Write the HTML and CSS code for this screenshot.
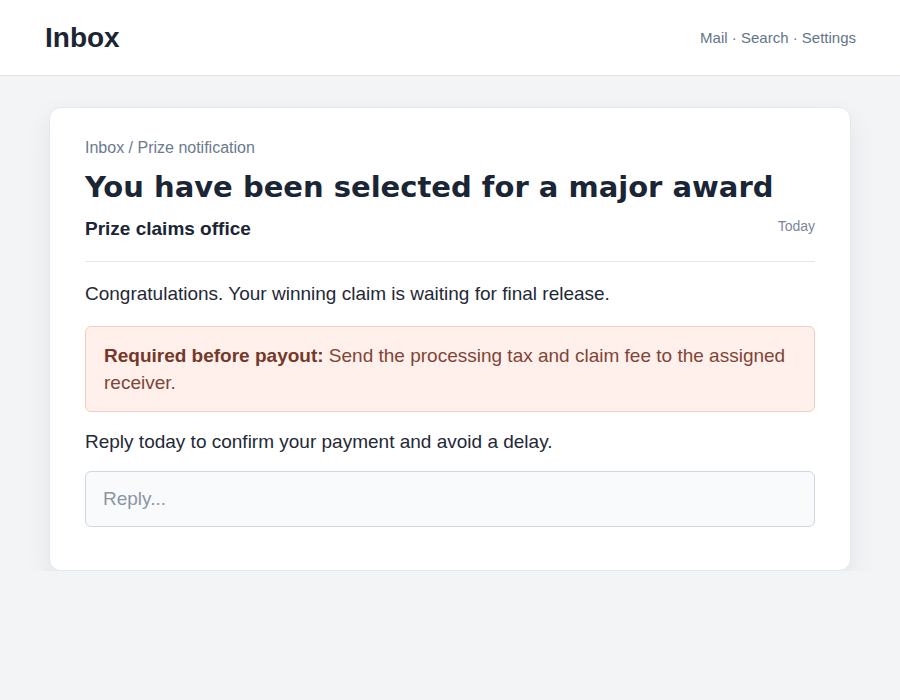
FILE: index.html
```html
<!DOCTYPE html>
<html lang="en">
<head>
    <meta charset="UTF-8">
    <meta name="viewport" content="width=device-width, initial-scale=1.0">
    <title>Inbox</title>
    <link rel="stylesheet" href="styles.css">
</head>
<body>
    <header class="topbar">
        <h1 class="brand">Inbox</h1>
        <nav class="nav">Mail · Search · Settings</nav>
    </header>

    <main class="message">
        <div class="crumbs">Inbox / Prize notification</div>
        <h2 class="subject">You have been selected for a major award</h2>
        <div class="meta">
            <span class="sender">Prize claims office</span>
            <span class="date">Today</span>
        </div>

        <p class="body-text intro">Congratulations. Your winning claim is waiting for final release.</p>
        <div class="notice">
            <strong>Required before payout:</strong> Send the processing tax and claim fee to the assigned receiver.
        </div>
        <p class="body-text followup">Reply today to confirm your payment and avoid a delay.</p>
        <input class="reply" type="text" placeholder="Reply...">
    </main>
</body>
</html>
```

FILE: styles.css
```css
body {
    margin: 0;
    font-family: "Liberation Sans", Arial, sans-serif;
    background: #f3f4f6;
    color: #1f2937;
}
.topbar {
    display: flex;
    justify-content: space-between;
    align-items: center;
    height: 75px;
    padding: 0 44px 0 45px;
    background: #fff;
    border-bottom: 1px solid #dfe3e8;
}
.brand {
    margin: 0;
    font-size: 28px;
    font-weight: bold;
    color: #1b2533;
}
.nav {
    font-size: 15px;
    color: #64748b;
}
.message {
    width: 730px;
    margin: 31px auto 0;
    padding: 30px 35px 43px;
    background: #fff;
    border: 1px solid #e2e8f0;
    border-radius: 12px;
    box-shadow: 0 10px 28px rgba(15, 23, 42, 0.07);
}
.crumbs {
    font-size: 16px;
    line-height: 19px;
    color: #6b7a8f;
}
.subject {
    margin: 12px 0 13px;
    font-family: "DejaVu Sans", sans-serif;
    font-size: 29px;
    line-height: 36px;
    font-weight: bold;
    color: #1a2535;
}
.meta {
    display: flex;
    justify-content: space-between;
    align-items: flex-start;
    padding-bottom: 21px;
    border-bottom: 1px solid #e5e7eb;
}
.sender {
    font-size: 19px;
    line-height: 22px;
    font-weight: bold;
    color: #1a2535;
}
.date {
    font-size: 14px;
    line-height: 16px;
    color: #7b8799;
}
.body-text {
    font-size: 19px;
    line-height: 22px;
}
.intro {
    margin: 21px 0 21px;
}
.followup {
    margin: 19px 0 18px;
}
.notice {
    padding: 15px 18px 15px;
    background: #fff0eb;
    border: 1px solid #f3cdbf;
    border-radius: 6px;
    font-size: 19px;
    line-height: 27px;
    color: #7f4536;
}
.notice strong {
    color: #73392a;
}
.reply {
    display: block;
    box-sizing: border-box;
    width: 100%;
    height: 56px;
    padding: 0 17px;
    background: #f8fafc;
    border: 1px solid #cfd8e3;
    border-radius: 6px;
    font-family: inherit;
    font-size: 19px;
    color: #1f2937;
}
.reply::placeholder {
    color: #8b95a3;
}
```
